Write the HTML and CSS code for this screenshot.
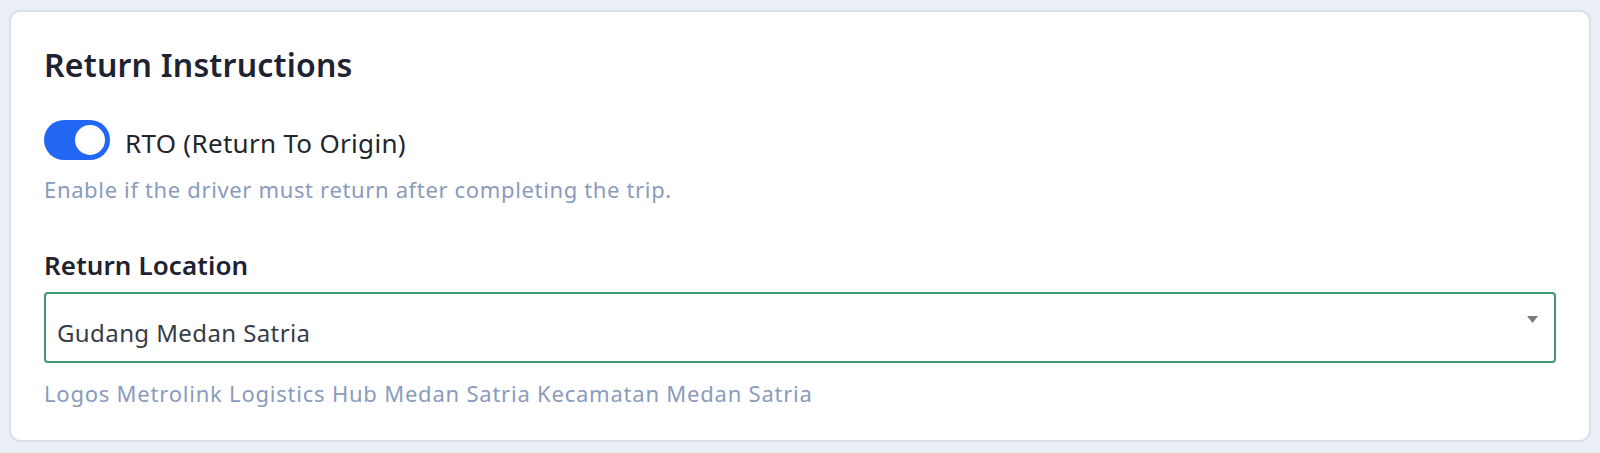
FILE: index.html
```html
<!DOCTYPE html>
<html lang="en">
<head>
<meta charset="utf-8">
<title>Return Instructions</title>
<link rel="stylesheet" href="styles.css">
</head>
<body>
<section class="card">
  <h2 class="card-title">Return Instructions</h2>
  <div class="toggle-row">
    <span class="switch" role="switch" aria-checked="true"><span class="knob"></span></span>
    <span class="toggle-label">RTO (Return To Origin)</span>
  </div>
  <p class="hint hint-top">Enable if the driver must return after completing the trip.</p>
  <div class="field-label">Return Location</div>
  <div class="select">
    <span class="select-value">Gudang Medan Satria</span>
    <svg class="select-arrow" width="11" height="7" viewBox="0 0 11 7"><path d="M0 0H11L5.5 7Z" fill="#7a7a7a"/></svg>
  </div>
  <p class="hint hint-bottom">Logos Metrolink Logistics Hub Medan Satria Kecamatan Medan Satria</p>
</section>
</body>
</html>
```

FILE: styles.css
```css
* { box-sizing: border-box; }
html, body { margin: 0; padding: 0; }
body {
  background: #eaeef5;
  font-family: "Noto Sans", "Open Sans", sans-serif;
  padding: 10px 9px 11px 9px;
}
.card {
  background: #ffffff;
  border: 2px solid #d9deea;
  border-radius: 11px;
  padding: 35px 33px 33px 33px;
}
.card-title {
  margin: 0;
  font-size: 32px;
  line-height: 36px;
  font-weight: 600;
  letter-spacing: 0.2px;
  color: #1d2331;
}
.toggle-row {
  display: flex;
  align-items: flex-start;
  gap: 15px;
  margin-top: 37px;
}
.switch {
  width: 66px;
  height: 40px;
  border-radius: 20px;
  background: #2266f4;
  display: flex;
  align-items: center;
  justify-content: flex-end;
  padding-right: 5px;
  flex: none;
}
.knob {
  width: 30px;
  height: 30px;
  border-radius: 50%;
  background: #ffffff;
}
.toggle-label {
  font-size: 26px;
  line-height: 30px;
  letter-spacing: 0.3px;
  margin-top: 8px;
  color: #23252c;
}
.hint {
  margin: 0;
  font-size: 22px;
  line-height: 28px;
  letter-spacing: 0.65px;
  color: #8a9bbd;
}
.hint-top { margin-top: 15px; }
.field-label {
  margin-top: 46px;
  font-size: 26px;
  line-height: 32px;
  font-weight: 600;
  letter-spacing: 0.1px;
  color: #1d2331;
}
.select {
  margin-top: 11px;
  height: 71px;
  border: 2px solid #3d9a6b;
  border-radius: 4px;
  display: flex;
  align-items: flex-start;
  justify-content: space-between;
  padding: 24px 16px 0 11px;
}
.select-value {
  font-size: 24px;
  line-height: 30px;
  letter-spacing: 0.4px;
  color: #383c46;
}
.select-arrow {
  margin-top: -2px;
  flex: none;
}
.hint-bottom {
  margin-top: 16px;
  letter-spacing: 0.78px;
}
```
